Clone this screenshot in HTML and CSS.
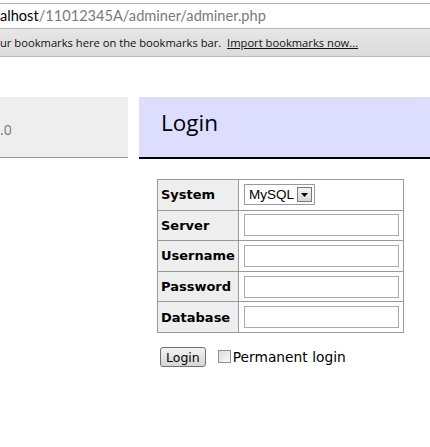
FILE: index.html
```html
<!DOCTYPE html>
<html>
<head>
<meta charset="utf-8">
<link rel="stylesheet" href="styles.css">
</head>
<body>
<div class="chrome">
  <div class="urlbar"><span class="host">alhost</span><span class="path">/11012345A/adminer/adminer.php</span></div>
  <div class="bookmarks">ur bookmarks here on the bookmarks bar.&nbsp; <a class="import">Import bookmarks now...</a></div>
</div>
<div class="page">
  <div class="menu"><span class="ver">.0</span></div>
  <div class="content">
    <h2 class="title">Login</h2>
    <div class="form">
      <table class="login">
        <tr><th>System</th><td><span class="select"><span class="sel-val">MySQL</span><span class="sel-btn"><svg width="7" height="4" viewBox="0 0 7 4"><path d="M0 0H7L3.5 4Z" fill="#000"/></svg></span></span></td></tr>
        <tr><th>Server</th><td><span class="input"></span></td></tr>
        <tr><th>Username</th><td><span class="input"></span></td></tr>
        <tr><th>Password</th><td><span class="input"></span></td></tr>
        <tr><th>Database</th><td><span class="input"></span></td></tr>
      </table>
      <div class="actions">
        <span class="btn">Login</span>
        <span class="check"></span>
        <span class="perm">Permanent login</span>
      </div>
    </div>
  </div>
</div>
</body>
</html>
```

FILE: styles.css
```css
html, body { margin: 0; padding: 0; background: #fff; }
body { font-family: "DejaVu Sans", Verdana, sans-serif; font-size: 13px; color: #000; }

.chrome { padding-top: 3px; }
.urlbar {
  border-top: 1px solid #b4b4b4;
  height: 25px;
  box-sizing: border-box;
  font-family: Lato, "Open Sans", sans-serif;
  font-size: 14.6px;
  line-height: 23px;
  white-space: nowrap;
  overflow: hidden;
  background: #fff;
}
.host { color: #000; }
.path { color: #7a7a7a; }
.bookmarks {
  border-top: 1px solid #b8b8b8;
  border-bottom: 1px solid #b8b8b8;
  height: 29px;
  box-sizing: border-box;
  background: linear-gradient(#e6e6e6, #dcdcdc);
  font-family: "Open Sans", "Noto Sans", sans-serif;
  font-size: 11.2px;
  line-height: 28px;
  color: #111;
  white-space: nowrap;
  overflow: hidden;
}
.import { text-decoration: underline; color: #111; }

.page { display: flex; gap: 11px; margin-top: 40px; }
.menu {
  width: 128px;
  height: 61px;
  box-sizing: border-box;
  background: #eee;
  border-bottom: 1px solid #999;
  font-family: "Open Sans", "Noto Sans", sans-serif;
  font-size: 14px;
  color: #777;
  padding-top: 23px;
  flex: none;
}
.content { flex: 1; }
.title {
  margin: 0;
  height: 62px;
  box-sizing: border-box;
  background: #ddf;
  border-bottom: 2px solid #000;
  font-family: "Open Sans", "Noto Sans", sans-serif;
  font-weight: normal;
  font-size: 22.5px;
  color: #000;
  padding: 10px 0 0 22px;
}
.form { padding: 20px 0 0 18px; }
.login { border-collapse: collapse; border: 1px solid #999; }
.login th, .login td { border: 1px solid #999; height: 30.6px; padding: 0 3px 0 3px; box-sizing: border-box; }
.login th { background: #eee; text-align: left; font-weight: bold; font-size: 13px; width: 81px; }
.login td { padding: 0 4px 0 5px; width: 165px; }
.input {
  display: block;
  width: 155px;
  height: 22px;
  box-sizing: border-box;
  border: 1px solid #aaa;
  background: #fff;
}
.select {
  display: inline-flex;
  align-items: center;
  height: 21px;
  border: 1px solid #999;
  box-sizing: border-box;
  font-family: "Liberation Sans", Arial, sans-serif;
  font-size: 13.5px;
  padding-left: 4px;
}
.sel-val { margin-right: 3px; }
.sel-btn {
  width: 15px; height: 15px; box-sizing: border-box;
  border: 1px solid #777;
  background: linear-gradient(#f4f4f4, #d8d8d8);
  display: inline-flex; align-items: center; justify-content: center;
  margin-right: 2px;
}
.actions { display: flex; align-items: center; margin-top: 14px; padding-left: 3px; }
.btn {
  border: 1px solid #707070;
  border-radius: 3px;
  background: linear-gradient(#f2f2f2, #d6d6d6);
  padding: 0 5px;
  height: 20px;
  line-height: 19px;
  font-size: 12.5px;
  box-sizing: border-box;
}
.check {
  width: 13px; height: 13px; box-sizing: border-box;
  border: 1px solid #8e8f8f;
  background: linear-gradient(135deg, #dcdcdc, #fafafa);
  margin-left: 12px; margin-right: 2px;
}
.perm { font-size: 13.8px; }
```
